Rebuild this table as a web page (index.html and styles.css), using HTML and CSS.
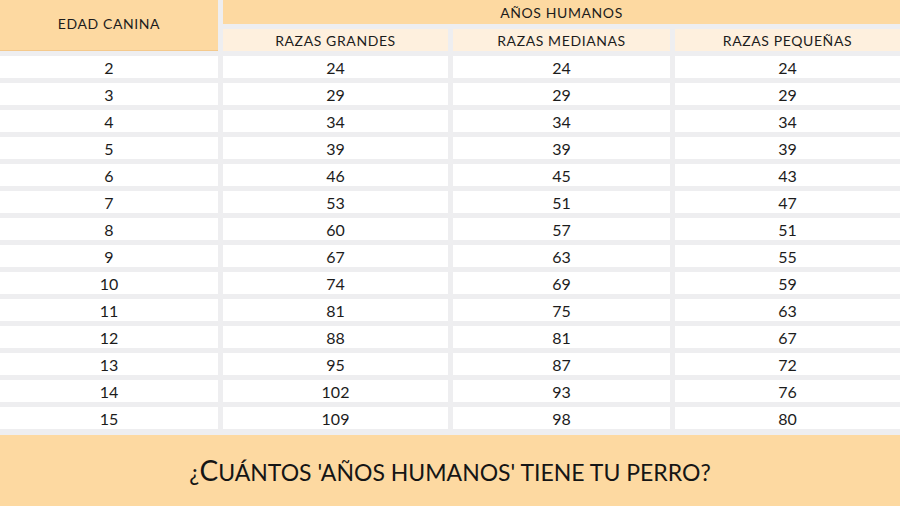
FILE: index.html
```html
<!DOCTYPE html>
<html lang="es">
<head>
<meta charset="utf-8">
<title>Edad canina</title>
<link rel="stylesheet" href="styles.css">
</head>
<body>
<div class="page">
  <div class="grid">
    <div class="head main col1">EDAD CANINA</div>
    <div class="head main span3">AÑOS HUMANOS</div>
    <div class="head sub">RAZAS GRANDES</div>
    <div class="head sub">RAZAS MEDIANAS</div>
    <div class="head sub">RAZAS PEQUEÑAS</div>

    <div class="cell">2</div><div class="cell">24</div><div class="cell">24</div><div class="cell">24</div>
    <div class="cell">3</div><div class="cell">29</div><div class="cell">29</div><div class="cell">29</div>
    <div class="cell">4</div><div class="cell">34</div><div class="cell">34</div><div class="cell">34</div>
    <div class="cell">5</div><div class="cell">39</div><div class="cell">39</div><div class="cell">39</div>
    <div class="cell">6</div><div class="cell">46</div><div class="cell">45</div><div class="cell">43</div>
    <div class="cell">7</div><div class="cell">53</div><div class="cell">51</div><div class="cell">47</div>
    <div class="cell">8</div><div class="cell">60</div><div class="cell">57</div><div class="cell">51</div>
    <div class="cell">9</div><div class="cell">67</div><div class="cell">63</div><div class="cell">55</div>
    <div class="cell">10</div><div class="cell">74</div><div class="cell">69</div><div class="cell">59</div>
    <div class="cell">11</div><div class="cell">81</div><div class="cell">75</div><div class="cell">63</div>
    <div class="cell">12</div><div class="cell">88</div><div class="cell">81</div><div class="cell">67</div>
    <div class="cell">13</div><div class="cell">95</div><div class="cell">87</div><div class="cell">72</div>
    <div class="cell">14</div><div class="cell">102</div><div class="cell">93</div><div class="cell">76</div>
    <div class="cell">15</div><div class="cell">109</div><div class="cell">98</div><div class="cell">80</div>
  </div>
  <div class="banner"><span class="title">¿<span class="big">C</span>UÁNTOS 'AÑOS HUMANOS' TIENE TU PERRO?</span></div>
</div>
</body>
</html>
```
FILE: styles.css
```css
html, body {
  margin: 0;
  padding: 0;
  background: #eeeef0;
}
.page {
  width: 900px;
  height: 506px;
  display: flex;
  flex-direction: column;
  gap: 6px;
  font-family: "Lato", "Open Sans", sans-serif;
  color: #1c1c1c;
  overflow: hidden;
}
.grid {
  display: grid;
  grid-template-columns: 218px 225px 217px 225px;
  grid-template-rows: 24px 22px repeat(14, 22px);
  column-gap: 5px;
  row-gap: 5px;
}
.head {
  display: flex;
  align-items: center;
  justify-content: center;
  font-size: 14px;
  letter-spacing: 0.6px;
}
.main {
  background: #fdd9a1;
}
.col1 {
  grid-row: 1 / span 2;
  border-bottom: 1px solid #f4c98c;
  padding-bottom: 4px;
  box-sizing: border-box;
}
.span3 {
  grid-column: 2 / span 3;
}
.sub {
  background: #fef0de;
}
.cell {
  background: #ffffff;
  display: flex;
  align-items: center;
  justify-content: center;
  font-size: 16px;
}
.banner {
  flex: 1;
  background: #fdd9a1;
  display: flex;
  align-items: center;
  justify-content: center;
  padding-bottom: 2px;
}
.title {
  font-size: 23px;
  letter-spacing: 0;
  color: #151515;
}
.big {
  font-size: 28px;
}
```
